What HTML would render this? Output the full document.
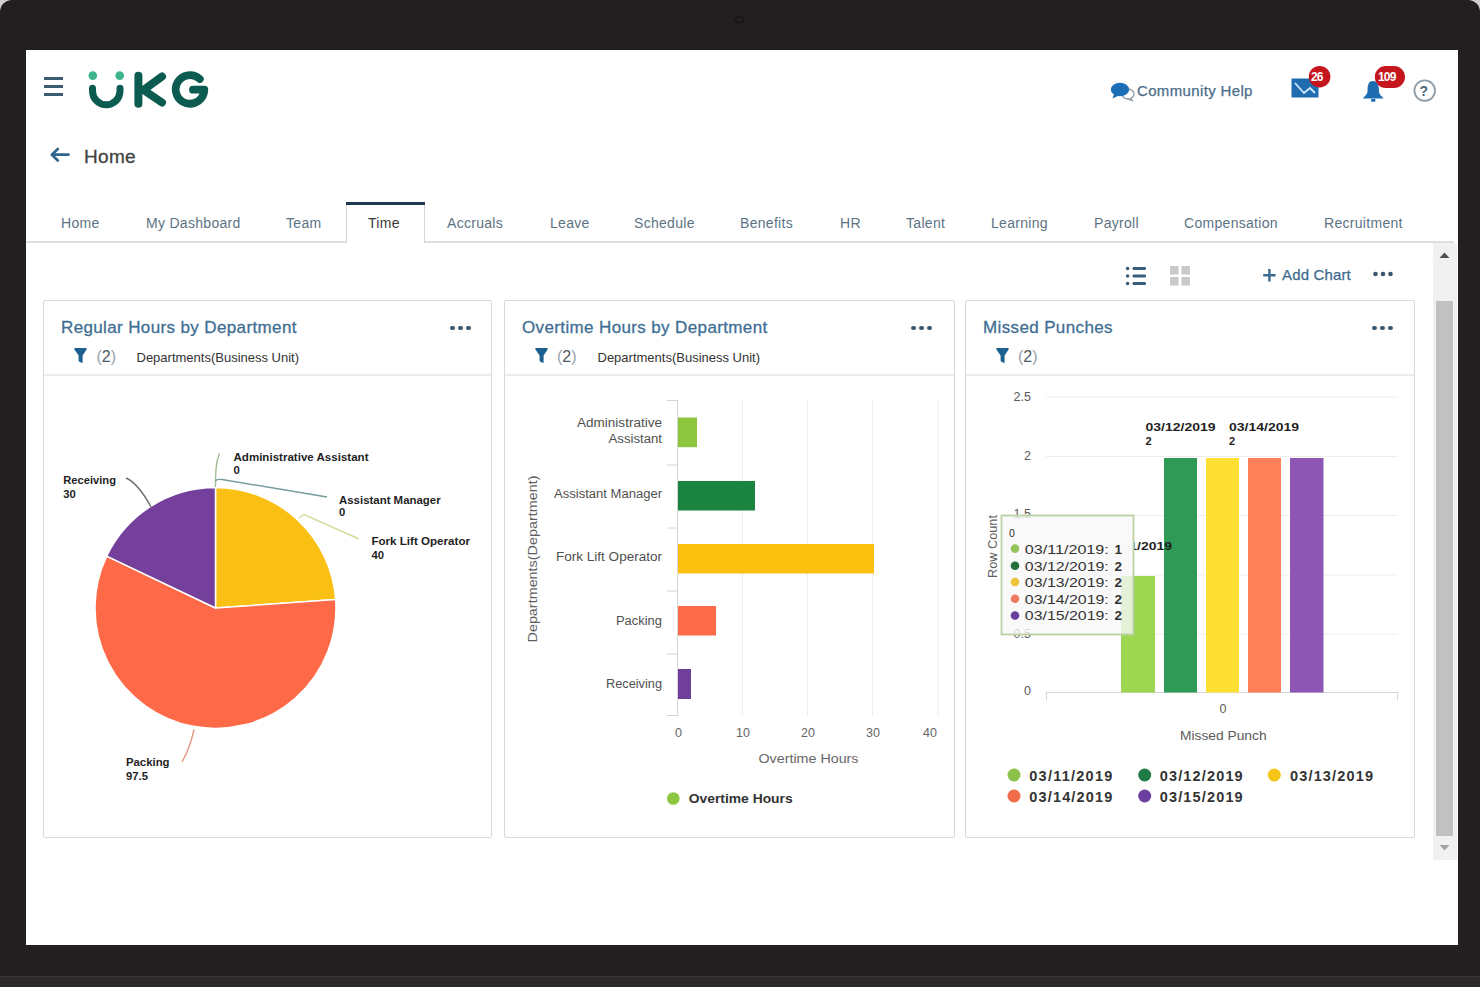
<!DOCTYPE html>
<html><head><meta charset="utf-8">
<style>
*{margin:0;padding:0;box-sizing:border-box}
html,body{width:1480px;height:987px;overflow:hidden;background:#cfcfcf;font-family:"Liberation Sans",sans-serif}
.a{position:absolute}
.t{position:absolute;white-space:nowrap;line-height:1}
#screen{position:absolute;left:26px;top:50px;width:1432px;height:895px;background:#fff}
.tab{position:absolute;top:216px;font-size:14px;color:#5c7384;letter-spacing:.3px;white-space:nowrap;line-height:1}
.panel{position:absolute;top:300px;height:538px;border:1px solid #d9d9d9;border-radius:2px;background:#fff}
.ptitle{position:absolute;font-size:17px;color:#3f6f94;-webkit-text-stroke:.3px #3f6f94;letter-spacing:.37px;white-space:nowrap;line-height:1;top:319px}
.dots{position:absolute;top:325px;width:21px;height:5px}
.dots i{position:absolute;top:.5px;width:4.5px;height:4.5px;border-radius:50%;background:#3b5670}
.sep{position:absolute;top:374px;height:2px;background:#ececec}
.cnt{position:absolute;top:349px;font-size:16px;color:#98a2aa;line-height:1;white-space:nowrap}
.dept{position:absolute;top:351px;font-size:13px;color:#333;line-height:1;white-space:nowrap}
svg{position:absolute;overflow:visible}
</style></head><body>
<div class="a" style="left:0;top:0;width:1480px;height:987px;background:#231f20;border-radius:12px 12px 0 0"></div>
<!-- laptop frame bottom strip -->
<div class="a" style="left:0;top:976px;width:1480px;height:11px;background:#2c292a"></div>
<div class="a" style="left:0;top:976px;width:1480px;height:1px;background:#3a3738"></div>
<div class="a" style="left:735px;top:16px;width:9px;height:7px;border-radius:50%;border:1px solid #151213"></div>

<div id="screen"></div>

<!-- hamburger -->
<div class="a" style="left:44px;top:77px;width:19px;height:3px;background:#3a5b72"></div>
<div class="a" style="left:44px;top:85px;width:19px;height:3px;background:#3a5b72"></div>
<div class="a" style="left:44px;top:93px;width:19px;height:3px;background:#3a5b72"></div>

<!-- UKG logo -->
<svg style="left:0;top:0" width="1480" height="987" viewBox="0 0 1480 987">
  <g fill="none" stroke="#0b5b50" stroke-linecap="round" stroke-linejoin="round">
    <path d="M92.5 88.3 V91 A13.75 13.75 0 0 0 120 91 V88.3" stroke-width="7"/>
    <path d="M138.4 75.8 V103.8" stroke-width="8"/>
    <path d="M162 76.5 L143.5 90 L162 102.5" stroke-width="8"/>
    <path d="M199.8 79 A14.3 14.3 0 1 0 204.3 89.7 L193 89.7" stroke-width="7.8"/>
  </g>
  <circle cx="92.8" cy="75.6" r="4.3" fill="#3db48c"/>
  <circle cx="119.7" cy="75.6" r="4.3" fill="#3db48c"/>
</svg>

<!-- back arrow + Home -->
<svg style="left:0;top:0" width="1480" height="987">
  <path d="M68.5 154.7 H52 M57.8 149 L51.8 154.7 L57.8 160.5" fill="none" stroke="#2f6690" stroke-width="2.7" stroke-linecap="round" stroke-linejoin="round"/>
</svg>
<div class="t" style="left:84px;top:147px;font-size:19px;color:#424242;letter-spacing:.3px;-webkit-text-stroke:.3px #424242">Home</div>

<!-- community help -->
<svg style="left:0;top:0" width="1480" height="987">
  <ellipse cx="1128" cy="94" rx="6" ry="5" fill="#fff" stroke="#8d9aa3" stroke-width="1.3"/>
  <path d="M1130 98.5 L1133 101 L1127.5 99" fill="#fff" stroke="#8d9aa3" stroke-width="1.1"/>
  <ellipse cx="1120" cy="89.5" rx="9.2" ry="6.8" fill="#1a6fb5"/>
  <path d="M1114 94 L1112.5 98.5 L1119 95.5 Z" fill="#1a6fb5"/>
  <!-- mail -->
  <rect x="1291.5" y="78.5" width="27" height="19" fill="#1f6db0"/>
  <path d="M1295 83 L1304 93 L1310 88 L1315 93" fill="none" stroke="#cfe8fa" stroke-width="1.8"/>
  <circle cx="1319.6" cy="76.7" r="10.8" fill="#c4161c"/>
  <!-- bell -->
  <path d="M1373 81 C1368 81 1367.5 86 1367.5 91 C1367.5 95 1364 96.5 1363 98.5 H1383.5 C1382.5 96.5 1379 95 1379 91 C1379 86 1378 81 1373 81 Z" fill="#1f6db0"/>
  <rect x="1371" y="99" width="4.5" height="2.8" rx="1" fill="#1f6db0"/>
  <rect x="1374.8" y="66" width="30.2" height="22" rx="11" fill="#c4161c"/>
  <!-- help -->
  <circle cx="1424.7" cy="90.6" r="10.3" fill="#fff" stroke="#8f9ca5" stroke-width="1.8"/>
</svg>
<div class="t" style="left:1137px;top:83px;font-size:15px;color:#4a6c88;letter-spacing:.35px;-webkit-text-stroke:.25px #4a6c88">Community Help</div>
<div class="t" style="left:1311px;top:71px;font-size:12px;font-weight:bold;color:#fff;letter-spacing:-.8px">26</div>
<div class="t" style="left:1378px;top:71px;font-size:12px;font-weight:bold;color:#fff;letter-spacing:-.8px">109</div>
<div class="t" style="left:1419.5px;top:83.5px;font-size:14px;font-weight:bold;color:#4f6676">?</div>

<!-- tabs -->
<div class="a" style="left:26px;top:241px;width:1428px;height:2px;background:#dedede"></div>
<div class="a" style="left:345.5px;top:203px;width:79px;height:40px;background:#fff;border-left:1px solid #d5d5d5;border-right:1px solid #d5d5d5"></div>
<div class="a" style="left:345.5px;top:202px;width:79px;height:3px;background:#1e3a52"></div>
<div class="tab" style="left:61px">Home</div>
<div class="tab" style="left:146px">My Dashboard</div>
<div class="tab" style="left:286px">Team</div>
<div class="tab" style="left:368px;color:#3a3a3a">Time</div>
<div class="tab" style="left:447px">Accruals</div>
<div class="tab" style="left:550px">Leave</div>
<div class="tab" style="left:634px">Schedule</div>
<div class="tab" style="left:740px">Benefits</div>
<div class="tab" style="left:840px">HR</div>
<div class="tab" style="left:906px">Talent</div>
<div class="tab" style="left:991px">Learning</div>
<div class="tab" style="left:1094px">Payroll</div>
<div class="tab" style="left:1184px">Compensation</div>
<div class="tab" style="left:1324px">Recruitment</div>

<!-- scrollbar -->
<div class="a" style="left:1433px;top:243px;width:24px;height:617px;background:#f1f1f1"></div>
<div class="a" style="left:1436px;top:301px;width:17px;height:535px;background:#c1c1c1"></div>
<svg style="left:0;top:0" width="1480" height="987">
  <path d="M1439.5 258 L1444.5 252.5 L1449.5 258 Z" fill="#505050"/>
  <path d="M1439.5 845 L1444.5 850.5 L1449.5 845 Z" fill="#a3a3a3"/>
</svg>

<!-- toolbar -->
<svg style="left:0;top:0" width="1480" height="987">
  <g fill="#3b5d78">
    <circle cx="1127.6" cy="268.5" r="1.8"/><rect x="1132.5" y="267" width="13.5" height="3" rx="1.3"/>
    <circle cx="1127.6" cy="276" r="1.8"/><rect x="1132.5" y="274.5" width="13.5" height="3" rx="1.3"/>
    <circle cx="1127.6" cy="283.5" r="1.8"/><rect x="1132.5" y="282" width="13.5" height="3" rx="1.3"/>
  </g>
  <g fill="#c9c9c9">
    <rect x="1170" y="266" width="8.5" height="8.5"/><rect x="1181.5" y="266" width="8.5" height="8.5"/>
    <rect x="1170" y="277" width="8.5" height="8.5"/><rect x="1181.5" y="277" width="8.5" height="8.5"/>
  </g>
  <path d="M1269.4 269 V281.5 M1263.2 275.3 H1275.6" stroke="#3d6a8d" stroke-width="2.4"/>
  <g fill="#3b5570"><circle cx="1375.5" cy="274" r="2.3"/><circle cx="1383" cy="274" r="2.3"/><circle cx="1390.5" cy="274" r="2.3"/></g>
</svg>
<div class="t" style="left:1282px;top:267px;font-size:15px;color:#3d6a8d;letter-spacing:.15px;-webkit-text-stroke:.25px #3d6a8d">Add Chart</div>

<!-- panels -->
<div class="panel" style="left:43px;width:449px"></div>
<div class="panel" style="left:504px;width:451px"></div>
<div class="panel" style="left:965px;width:450px"></div>
<div class="sep" style="left:44px;width:447px"></div>
<div class="sep" style="left:505px;width:449px"></div>
<div class="sep" style="left:966px;width:448px"></div>

<div class="ptitle" style="left:61px">Regular Hours by Department</div>
<div class="ptitle" style="left:522px">Overtime Hours by Department</div>
<div class="ptitle" style="left:983px">Missed Punches</div>
<div class="dots" style="left:450px"><i style="left:0"></i><i style="left:8px"></i><i style="left:16px"></i></div>
<div class="dots" style="left:911px"><i style="left:0"></i><i style="left:8px"></i><i style="left:16px"></i></div>
<div class="dots" style="left:1372px"><i style="left:0"></i><i style="left:8px"></i><i style="left:16px"></i></div>
<svg style="left:0;top:0" width="1480" height="987">
  <g fill="#1d5f8f">
    <path d="M75 348 H86 Q87.2 348.2 86.6 349.5 L82.6 355.5 V362 Q82.6 363.5 81.6 362.8 L79.4 361.8 Q78.6 361.3 78.6 360.3 V355.5 L74.4 349.5 Q73.8 348.2 75 348 Z"/>
    <path d="M536 348 H547 Q548.2 348.2 547.6 349.5 L543.6 355.5 V362 Q543.6 363.5 542.6 362.8 L540.4 361.8 Q539.6 361.3 539.6 360.3 V355.5 L535.4 349.5 Q534.8 348.2 536 348 Z"/>
    <path d="M997 348 H1008 Q1009.2 348.2 1008.6 349.5 L1004.6 355.5 V362 Q1004.6 363.5 1003.6 362.8 L1001.4 361.8 Q1000.6 361.3 1000.6 360.3 V355.5 L996.4 349.5 Q995.8 348.2 997 348 Z"/>
  </g>
</svg>
<div class="cnt" style="left:96.5px">(<span style="color:#4f5a63">2</span>)</div>
<div class="cnt" style="left:557px">(<span style="color:#4f5a63">2</span>)</div>
<div class="cnt" style="left:1018px">(<span style="color:#4f5a63">2</span>)</div>
<div class="dept" style="left:136.5px">Departments(Business Unit)</div>
<div class="dept" style="left:597.5px">Departments(Business Unit)</div>


<!-- PIE CHART -->
<svg style="left:0;top:0" width="1480" height="987">
  <path d="M215.5 608 L215.5 487.5 A120.5 120.5 0 0 1 335.7 599.6 Z" fill="#fbc014" stroke="#fff" stroke-width="1.5" stroke-linejoin="round"/>
  <path d="M215.5 608 L335.7 599.6 A120.5 120.5 0 1 1 106.7 556.1 Z" fill="#fe6a47" stroke="#fff" stroke-width="1.5" stroke-linejoin="round"/>
  <path d="M215.5 608 L106.7 556.1 A120.5 120.5 0 0 1 215.5 487.5 Z" fill="#74409b" stroke="#fff" stroke-width="1.5" stroke-linejoin="round"/>
  <g fill="none" stroke-width="1.4">
    <path d="M215.5 487 C215.5 470 216 462 219.5 453.5" stroke="#a3bd94"/>
    <path d="M215.5 481 Q216 479 222 479.5 L327 497" stroke="#779c9c"/>
    <path d="M299 518 L304 514.5 L359 539" stroke="#d6db9c"/>
    <path d="M126 478 Q138 483 151 507" stroke="#6e6e72"/>
    <path d="M194 729.5 Q190 748 182 762" stroke="#e59a86"/>
  </g>
  <g font-family="Liberation Sans" font-weight="bold" font-size="11.3" fill="#1f1f1f">
    <text x="233.5" y="460.6" textLength="135" lengthAdjust="spacingAndGlyphs">Administrative Assistant</text>
    <text x="233.5" y="474.3">0</text>
    <text x="339" y="503.7" textLength="101.6" lengthAdjust="spacingAndGlyphs">Assistant Manager</text>
    <text x="339" y="515.5">0</text>
    <text x="371.4" y="545" textLength="98.6" lengthAdjust="spacingAndGlyphs">Fork Lift Operator</text>
    <text x="371.4" y="558.6">40</text>
    <text x="63.3" y="484" textLength="52.7" lengthAdjust="spacingAndGlyphs">Receiving</text>
    <text x="63.3" y="497.8">30</text>
    <text x="126" y="766" textLength="43.5" lengthAdjust="spacingAndGlyphs">Packing</text>
    <text x="126" y="779.8">97.5</text>
  </g>
</svg>

<!-- BAR CHART -->
<svg style="left:0;top:0" width="1480" height="987">
  <g stroke="#ededed" stroke-width="1">
    <path d="M742.5 400 V716 M807.5 400 V716 M872.5 400 V716 M938 400 V716"/>
  </g>
  <g stroke="#d6d6d6" stroke-width="1">
    <path d="M677.5 400 V716 M667 400.5 H677.5 M667 465 H677.5 M667 528 H677.5 M667 591 H677.5 M667 654 H677.5 M667 715.5 H677.5"/>
  </g>
  <rect x="678" y="417.5" width="19" height="29.7" fill="#8cc63e"/>
  <rect x="678" y="481" width="77" height="29.5" fill="#1c8441"/>
  <rect x="678" y="544" width="196" height="29.5" fill="#fcc10f"/>
  <rect x="678" y="606" width="38" height="29.5" fill="#fd6b48"/>
  <rect x="678" y="669" width="13" height="30" fill="#6f3f99"/>
  <g font-family="Liberation Sans" font-size="12.5" fill="#505050" text-anchor="end">
    <text x="662" y="426.8" textLength="85" lengthAdjust="spacingAndGlyphs">Administrative</text>
    <text x="662" y="442.5" textLength="53.5" lengthAdjust="spacingAndGlyphs">Assistant</text>
    <text x="662" y="498" textLength="108" lengthAdjust="spacingAndGlyphs">Assistant Manager</text>
    <text x="662" y="560.5" textLength="106" lengthAdjust="spacingAndGlyphs">Fork Lift Operator</text>
    <text x="662" y="624.5" textLength="46" lengthAdjust="spacingAndGlyphs">Packing</text>
    <text x="662" y="687.5" textLength="56" lengthAdjust="spacingAndGlyphs">Receiving</text>
  </g>
  <g font-family="Liberation Sans" font-size="12.5" fill="#666" text-anchor="middle">
    <text x="678.5" y="737">0</text>
    <text x="743" y="737">10</text>
    <text x="808" y="737">20</text>
    <text x="873" y="737">30</text>
    <text x="930" y="737">40</text>
    <text x="808.5" y="763" textLength="100" lengthAdjust="spacingAndGlyphs">Overtime Hours</text>
  </g>
  <text transform="translate(536.5 559) rotate(-90)" font-family="Liberation Sans" font-size="12.5" fill="#5e5e5e" text-anchor="middle" textLength="167" lengthAdjust="spacingAndGlyphs">Departments(Department)</text>
  <circle cx="673.3" cy="798.5" r="6.3" fill="#8cc63e"/>
  <text x="688.7" y="803" font-family="Liberation Sans" font-weight="bold" font-size="13" fill="#333" textLength="104" lengthAdjust="spacingAndGlyphs">Overtime Hours</text>
</svg>

<!-- MISSED PUNCHES -->
<svg style="left:0;top:0" width="1480" height="987">
  <g stroke="#ededed" stroke-width="1">
    <path d="M1046 397 H1398 M1046 456.5 H1398 M1046 515.5 H1398 M1046 575 H1398 M1046 634 H1398"/>
  </g>
  <path d="M1046 692.5 H1398 M1046.5 692.5 V700 M1397.5 692.5 V700" stroke="#d6d6d6" stroke-width="1" fill="none"/>
  <rect x="1121" y="576" width="34" height="116.5" fill="#9dd650"/>
  <rect x="1164" y="458" width="33" height="234.5" fill="#2e9a55"/>
  <rect x="1206" y="458" width="33" height="234.5" fill="#fde033"/>
  <rect x="1248" y="458" width="33" height="234.5" fill="#fd8059"/>
  <rect x="1290" y="458" width="33.5" height="234.5" fill="#8e56b4"/>
  <g font-family="Liberation Sans" font-size="12.5" fill="#5a5a5a" text-anchor="end">
    <text x="1031" y="401">2.5</text>
    <text x="1031" y="459.5">2</text>
    <text x="1031" y="518">1.5</text>
    
    <text x="1031" y="638">0.5</text>
    <text x="1031" y="695">0</text>
  </g>
  <g font-family="Liberation Sans" font-size="12.5" fill="#5a5a5a" text-anchor="middle">
    <text x="1223" y="713">0</text>
    <text x="1223.3" y="740" textLength="86.6" lengthAdjust="spacingAndGlyphs">Missed Punch</text>
  </g>
  <text transform="translate(997 546.5) rotate(-90)" font-family="Liberation Sans" font-size="12.5" fill="#5e5e5e" text-anchor="middle" textLength="63" lengthAdjust="spacingAndGlyphs">Row Count</text>
  <g font-family="Liberation Sans" font-weight="bold" font-size="11" fill="#1f1f1f">
    <text x="1145.5" y="431" textLength="70" lengthAdjust="spacingAndGlyphs">03/12/2019</text>
    <text x="1145.5" y="445">2</text>
    <text x="1229" y="431" textLength="70" lengthAdjust="spacingAndGlyphs">03/14/2019</text>
    <text x="1229" y="445">2</text>
    <clipPath id="cl1"><rect x="1133" y="530" width="60" height="30"/></clipPath><text clip-path="url(#cl1)" x="1103" y="549.5" textLength="69" lengthAdjust="spacingAndGlyphs">03/11/2019</text>
  </g>
  <!-- tooltip -->
  <rect x="1001.5" y="515.5" width="132" height="119" fill="#f8f8f8" fill-opacity="0.8" stroke="#bcd0a4" stroke-width="1.8"/>
  <g font-family="Liberation Sans" font-size="13.5" fill="#333">
    <text x="1009" y="536.5" font-size="10.5">0</text>
    <circle cx="1015" cy="548.6" r="4.3" fill="#92c45a"/>
    <circle cx="1015" cy="565.7" r="4.3" fill="#23703f"/>
    <circle cx="1015" cy="582" r="4.3" fill="#eec23a"/>
    <circle cx="1015" cy="598.8" r="4.3" fill="#f07a60"/>
    <circle cx="1015" cy="615.5" r="4.3" fill="#6b3f9c"/>
    <text x="1024.8" y="553.5" textLength="84" lengthAdjust="spacingAndGlyphs">03/11/2019:</text>
    <text x="1024.8" y="570.5" textLength="84" lengthAdjust="spacingAndGlyphs">03/12/2019:</text>
    <text x="1024.8" y="587" textLength="84" lengthAdjust="spacingAndGlyphs">03/13/2019:</text>
    <text x="1024.8" y="603.5" textLength="84" lengthAdjust="spacingAndGlyphs">03/14/2019:</text>
    <text x="1024.8" y="620.3" textLength="84" lengthAdjust="spacingAndGlyphs">03/15/2019:</text>
    <g font-weight="bold"><text x="1114.5" y="553.5">1</text><text x="1114.5" y="570.5">2</text><text x="1114.5" y="587">2</text><text x="1114.5" y="603.5">2</text><text x="1114.5" y="620.3">2</text></g>
  </g>
  <!-- legend -->
  <circle cx="1014" cy="775" r="6.5" fill="#8bc34a"/>
  <circle cx="1144.7" cy="775" r="6.5" fill="#1e7b45"/>
  <circle cx="1274.3" cy="775" r="6.5" fill="#f5c518"/>
  <circle cx="1014" cy="796" r="6.5" fill="#f26b4a"/>
  <circle cx="1144.7" cy="796" r="6.5" fill="#6b3fa0"/>
  <g font-family="Liberation Sans" font-weight="bold" font-size="14.5" fill="#333">
    <text x="1029.3" y="780.5" textLength="83" lengthAdjust="spacing">03/11/2019</text>
    <text x="1159.7" y="780.5" textLength="83" lengthAdjust="spacing">03/12/2019</text>
    <text x="1290" y="780.5" textLength="83" lengthAdjust="spacing">03/13/2019</text>
    <text x="1029.3" y="801.5" textLength="83" lengthAdjust="spacing">03/14/2019</text>
    <text x="1159.7" y="801.5" textLength="83" lengthAdjust="spacing">03/15/2019</text>
  </g>
</svg>

</body></html>
